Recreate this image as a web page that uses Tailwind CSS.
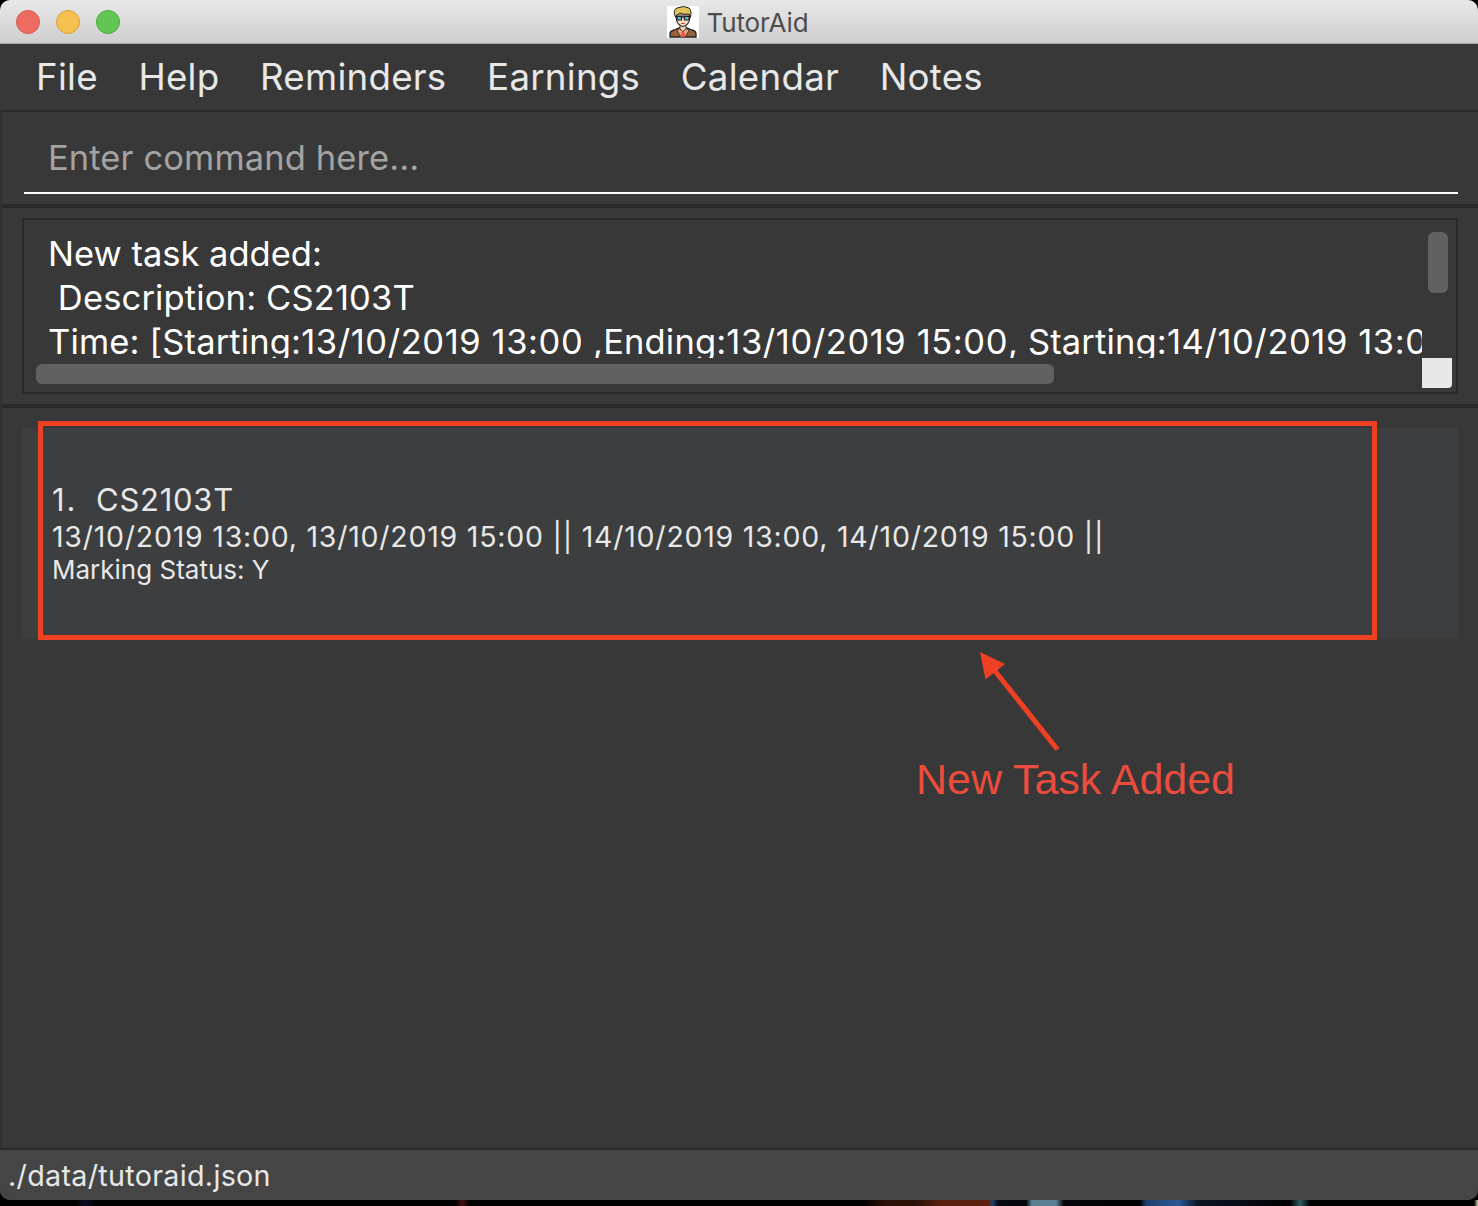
<!DOCTYPE html>
<html lang="en">
<head>
<meta charset="utf-8">
<title>TutorAid</title>
<script src="https://cdn.jsdelivr.net/npm/@tailwindcss/browser@4"></script>
</head>
<body class="bg-black">
<div class="relative flex h-[1206px] w-[1478px] flex-col overflow-hidden bg-black font-['Inter',sans-serif] text-[#e8e8e8]">
  <div class="flex h-[1200px] shrink-0 flex-col overflow-hidden rounded-[10px] bg-[#383838]">
    <header class="relative flex h-11 shrink-0 items-center justify-center border-b border-[#a8a8a8] bg-linear-to-b from-[#e8e8e8] to-[#cecece] pr-[3px]">
      <div class="absolute left-4 top-[10px] flex gap-4">
        <span class="size-6 rounded-full border border-[#d9584f] bg-[#ed6b60]"></span>
        <span class="size-6 rounded-full border border-[#dba03b] bg-[#f5c04f]"></span>
        <span class="size-6 rounded-full border border-[#4bab3e] bg-[#62c655]"></span>
      </div>
      <svg class="mr-2 h-8 w-8" viewBox="0 0 32 32">
        <rect width="32" height="32" fill="#fff"/>
        <path d="M3 31v-3q0-3 4-4l5-2h8l5 2q4 1 4 4v3z" fill="#9a6238" stroke="#222" stroke-width="1.3"/>
        <path d="M13 18v5l3 3 3-3v-5z" fill="#f2d6b8" stroke="#222" stroke-width=".8"/>
        <path d="M12.500 22.500l-2.500 2 3.500 6h5l3.500-6-2.500-2-3.500 3z" fill="#e9a07e" stroke="#222" stroke-width=".8"/>
        <path d="M14.800 26h2.400l1.300 5h-5z" fill="#e8564c"/>
        <path d="M9.500 9h13v5q-1 5-6.500 6.500-5.500-1.500-6.500-6.500z" fill="#f7dcc0" stroke="#222" stroke-width="1.100"/>
        <path d="M8.500 11Q5.500 4 10 2q7-3 12 0 3 3 1.500 9L22 8q-6 1-9-1l-3 2z" fill="#e6c455" stroke="#222" stroke-width="1"/>
        <path d="M10 10.500h4.500v3.500h-4.500zM17.500 10.500h4.500v3.500h-4.500z" fill="#5ec3dc" stroke="#222" stroke-width="1.200"/>
        <path d="M8 11h2M14.500 11h3M22 11h2" stroke="#222" stroke-width="1.300"/>
        <path d="M14.500 17.500h3" stroke="#a33" stroke-width="1"/>
      </svg>
      <span class="pt-[2px] text-[26px] leading-none tracking-[-0.15px] text-[#4d4d4d]">TutorAid</span>
    </header>
    <nav class="flex h-[66px] shrink-0 items-center gap-[40.600px] pl-9 text-[36.7px] leading-none tracking-[0.25px]">
      <span>File</span><span>Help</span><span>Reminders</span><span>Earnings</span><span>Calendar</span><span>Notes</span>
    </nav>
    <div class="flex min-h-0 grow flex-col border-l-2 border-[#303030]">
      <div class="h-[98px] shrink-0 border-y-2 border-b-4 border-[#292929] pl-[22px] pr-5">
        <div class="flex h-[82px] items-center border-b-2 border-white pl-6 pt-3 text-[34.5px] tracking-[0.1px] text-[#a3a3a3]"><span>Enter command here...</span></div>
      </div>
      <div class="h-[200px] shrink-0 border-b-4 border-[#292929] pt-[10px] pl-5 pr-5">
        <div class="relative h-44 border-2 border-[#292929] pl-6 pt-3">
          <div class="h-[126px] w-[1374px] overflow-hidden whitespace-pre text-[34.5px] leading-[44px] text-white"><div>New task added:</div><div class="tracking-[0.15px]"> Description: CS2103T</div><div class="tracking-[0.15px]">Time: [Starting:<span class="tracking-[0.58px]">13/10/2019 13:00</span> ,Ending:<span class="tracking-[0.58px]">13/10/2019 15:00</span>, Starting:<span class="tracking-[0.58px]">14/10/2019 13:00</span></div></div>
          <div class="absolute left-3 top-[144px] h-5 w-[1018px] rounded-[6px] bg-[#616161]"></div>
          <div class="absolute left-[1404px] top-3 h-[61px] w-5 rounded-[6px] bg-[#616161]"></div>
          <div class="absolute left-[1398px] top-[138px] size-[30px] rounded-br-[4px] bg-[#e8e8e8]"></div>
        </div>
      </div>
      <main class="grow pl-5 pr-5 pt-5">
        <div class="flex h-[210px] flex-col bg-[#3c3e3f] pl-[30px] pt-[52px]">
          <div class="flex h-10 items-center text-[31px] tracking-[0.75px]"><span class="w-[44px] tracking-[2px]">1.</span><span>CS2103T</span></div>
          <div class="flex h-[34px] items-center text-[28.500px] tracking-[0.76px]"><span>13/10/2019 13:00, 13/10/2019 15:00 || 14/10/2019 13:00, 14/10/2019 15:00 ||</span></div>
          <div class="flex h-[31px] items-center text-[26px]"><span>Marking Status: Y</span></div>
        </div>
      </main>
    </div>
    <footer class="flex h-[52px] shrink-0 items-center border-t-2 border-[#292929] bg-[#454545] pl-2 pt-[2px] text-[28.700px] tracking-[0.3px]"><span>./data/tutoraid.json</span></footer>
  </div>
  <div class="h-1.5 bg-[linear-gradient(90deg,#000_75px,#0a0d24_85px,#000_98px,#000_455px,#401010_462px,#000_470px,#000_862px,#2a1006_885px,#2a1006_915px,#56200f_940px,#5e2010_988px,#1f3f66_993px,#050a14_998px,#02040a_1026px,#5b7f90_1032px,#5b7f90_1056px,#04070c_1064px,#000_1140px,#1d3f6c_1146px,#2b5a96_1178px,#0a1424_1198px,#000_1290px,#2f5a60_1300px,#000_1310px,#000_1474px,#d8cfa8_1478px)]"></div>
  <div class="absolute left-[38px] top-[421px] h-[219px] w-[1339px] border-[5px] border-[#ee4023]"></div>
  <svg class="absolute left-[970px] top-[640px] h-[120px] w-[100px]" viewBox="970 640 100 120">
    <path d="M995 671L1057.500 749.500" stroke="#ee4023" stroke-width="5"/>
    <path d="M980 652l25 12-19.500 15.500z" fill="#ee4023"/>
  </svg>
  <div class="absolute left-[916px] top-[755px] whitespace-nowrap font-['Liberation_Sans',sans-serif] text-[43px] leading-[48px] tracking-[-0.04px] text-[#ec4c3e]">New Task Added</div>
</div>
</body>
</html>
